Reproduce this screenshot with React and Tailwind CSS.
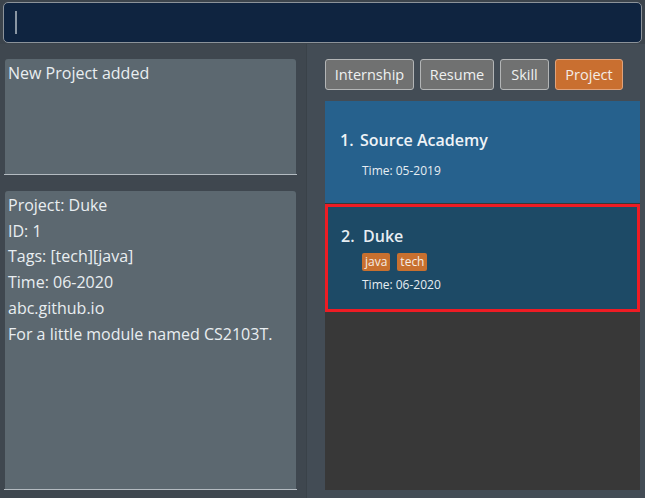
import React from "react";

const font = { fontFamily: '"Open Sans", "Noto Sans", sans-serif' };

function Btn({ children, w, active }) {
  return (
    <div
      className={`h-[31px] ${w} flex items-center justify-center rounded-[3px] border text-[14.5px] ${
        active
          ? "bg-[#c96f30] border-[#e0a27a] text-[#f4ece6]"
          : "bg-[#707171] border-[#b3b5b6] text-[#eef0f0]"
      }`}
    >
      {children}
    </div>
  );
}

export default function App() {
  return (
    <div className="w-[645px] h-[498px] bg-[#3e4750] flex flex-col overflow-hidden" style={font}>
      <div className="h-[44px] px-[3px] pt-[2px] bg-[#3c444c]">
        <div className="h-[41px] rounded-[5px] border border-[#8c939a] bg-[#0f2440] flex items-center pl-[11px]">
          <div className="w-[2px] h-[23px] bg-[#8a96a3]" />
        </div>
      </div>
      <div className="flex-1 flex min-h-0">
        <div className="w-[306px] bg-[#3f474f] pt-[15px] pl-[4px] pr-[9px] pb-[8px] flex flex-col">
          <div className="h-[116px] border-b border-[#b4bbc1] px-px">
            <div className="h-full bg-[#5c6870] rounded-t-[3px] px-[3px] pt-[2px] text-[16px] text-[#e9eef1]">
              New Project added
            </div>
          </div>
          <div className="mt-[16px] flex-1 border-b border-[#b4bbc1] px-px">
            <div className="h-full bg-[#5c6870] rounded-t-[3px] px-[3px] pt-[2px] text-[16px] leading-[25.7px] text-[#e9eef1]">
              <div>Project: Duke</div>
              <div>ID: 1</div>
              <div>Tags: [tech][java]</div>
              <div>Time: 06-2020</div>
              <div>abc.github.io</div>
              <div>For a little module named CS2103T.</div>
            </div>
          </div>
        </div>
        <div className="w-px bg-[#3a4249]" />
        <div className="flex-1 bg-[#434c55] pt-[15px] pl-[18px] pr-[5px] pb-[8px] flex flex-col">
          <div className="flex gap-[6px]">
            <Btn w="w-[89px]">Internship</Btn>
            <Btn w="w-[74px]">Resume</Btn>
            <Btn w="w-[49px]">Skill</Btn>
            <Btn w="w-[68px]" active>Project</Btn>
          </div>
          <div className="mt-[11px] flex-1 bg-[#383838] flex flex-col">
            <div className="h-[102px] bg-[#26618d] pl-[15px] pt-[26px]">
              <div className="flex items-center text-[16px] font-semibold text-[#eef3f7] h-[26px]">
                <span className="w-[20px]">1.</span>
                <span>Source Academy</span>
              </div>
              <div className="pl-[22px] mt-[9px] text-[12px] text-[#e6edf2]">Time: 05-2019</div>
            </div>
            <div className="mt-px h-[108px] bg-[#1d4a66] border-[3px] border-[#ee1c24] pl-[13px] pt-[16px]">
              <div className="flex items-center text-[16px] font-semibold text-[#e6edf2] h-[26px]">
                <span className="w-[22px]">2.</span>
                <span>Duke</span>
              </div>
              <div className="pl-[21px] mt-[4px] flex gap-[7px]">
                <span className="h-[18px] px-[3px] rounded-[2px] bg-[#c8702f] text-[12px] leading-[18px] text-[#f5ece4]">java</span>
                <span className="h-[18px] px-[3px] rounded-[2px] bg-[#c8702f] text-[12px] leading-[18px] text-[#f5ece4]">tech</span>
              </div>
              <div className="pl-[21px] mt-[5px] text-[12px] text-[#e6edf2]">Time: 06-2020</div>
            </div>
          </div>
        </div>
      </div>
    </div>
  );
}
